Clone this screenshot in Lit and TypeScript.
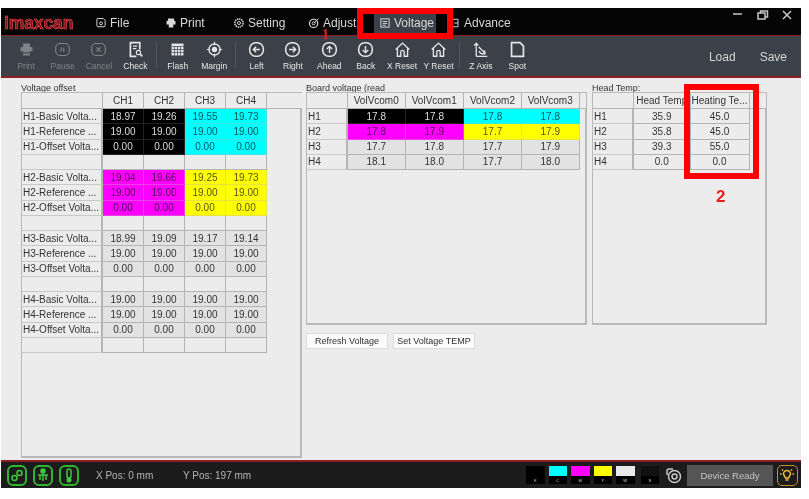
import { LitElement, html, css, svg } from 'lit';
import { customElement, property } from 'lit/decorators.js';

type Cell = { t: string; c?: string };

const ICONS: Record<string, unknown> = {
  print: svg`<path d="M6 7V3h8v4M3 12V8q0-1 1-1h12q1 0 1 1v4zM6 12v5h8v-5" fill="currentColor" stroke="none"/><path d="M6 14h8" stroke="#3c4149"/>`,
  pause: svg`<rect x="2" y="3" width="16" height="14" rx="5"/><path d="M8.5 7.500v5M11.500 7.500v5"/>`,
  cancel: svg`<rect x="2" y="3" width="16" height="14" rx="5"/><path d="M7.500 7.500l5 5M12.500 7.500l-5 5"/>`,
  check: svg`<path d="M15 10V2H4v16h7" stroke-width="2"/><path d="M7 6h5M7 9h4" /><circle cx="13.500" cy="13.500" r="2.500"/><path d="M15.500 15.500l2.500 2.500" stroke-width="2"/>`,
  flash: svg`<path d="M3 3h14v14H3z" fill="currentColor" stroke="none"/><path d="M3 6.500h14M3 10h14M3 13.500h14M6.500 6v11M10 6v11M13.500 6v11" stroke="#3c4149" stroke-width=".8"/>`,
  margin: svg`<path d="M10 1v4M10 15v4M1 10h4M15 10h4" /><circle cx="10" cy="10" r="6.500" stroke-width="1.600"/><circle cx="10" cy="10" r="2.500" fill="currentColor"/>`,
  left: svg`<rect x="2" y="2" width="16" height="16" rx="7" stroke-width="1.800"/><path d="M14 10H6.500M9.500 6.800L6.300 10l3.200 3.200" stroke-width="1.600"/>`,
  right: svg`<rect x="2" y="2" width="16" height="16" rx="7" stroke-width="1.800"/><path d="M6 10h7.500M10.500 6.800l3.200 3.200-3.200 3.200" stroke-width="1.600"/>`,
  ahead: svg`<rect x="2" y="2" width="16" height="16" rx="7" stroke-width="1.800"/><path d="M10 14V6.500M6.800 9.500L10 6.300l3.200 3.200" stroke-width="1.600"/>`,
  back: svg`<rect x="2" y="2" width="16" height="16" rx="7" stroke-width="1.800"/><path d="M10 6v7.500M6.800 10.500l3.200 3.200 3.200-3.200" stroke-width="1.600"/>`,
  home: svg`<path d="M2 10l8-7.500 8 7.500M4 8.500V18h4v-5q0-2 2-2t2 2v5h4V8.500" stroke-width="1.600"/>`,
  zaxis: svg`<path d="M5 18V3M2.500 5.500L5 2.500l2.500 3M5 18h13M8 7l8 8M15 11v4h-4M8 12l3 3" stroke-width="1.500"/>`,
  spot: svg`<path d="M3 2h10l4 4v12H3z" stroke-width="2"/>`,
};

const TOOLS: (null | { label: string; icon: string; off?: boolean })[] = [
  { label: 'Print', icon: 'print', off: true },
  { label: 'Pause', icon: 'pause', off: true },
  { label: 'Cancel', icon: 'cancel', off: true },
  { label: 'Check', icon: 'check' },
  null,
  { label: 'Flash', icon: 'flash' },
  { label: 'Margin', icon: 'margin' },
  null,
  { label: 'Left', icon: 'left' },
  { label: 'Right', icon: 'right' },
  { label: 'Ahead', icon: 'ahead' },
  { label: 'Back', icon: 'back' },
  { label: 'X Reset', icon: 'home' },
  { label: 'Y Reset', icon: 'home' },
  null,
  { label: 'Z Axis', icon: 'zaxis' },
  { label: 'Spot', icon: 'spot' },
];

const TABS = [
  { label: 'File', w: 70, icon: svg`<path d="M2.500 3.500q0-1.500 1.500-1.500h7l2.500 2.500v7q0 1.500-1.500 1.500H4q-1.500 0-1.500-1.500z"/><circle cx="8" cy="8.500" r="2"/>` },
  { label: 'Print', w: 68, icon: svg`<path d="M4 5V2h8v3M2 10V6q0-1 1-1h10q1 0 1 1v4zM5 10v4h6v-4" fill="currentColor" stroke="none"/>` },
  { label: 'Setting', w: 75, icon: svg`<circle cx="8" cy="8" r="5.500" stroke-dasharray="2 .8" stroke-width="2"/><circle cx="8" cy="8" r="2"/>` },
  { label: 'Adjust', w: 71, icon: svg`<circle cx="7.500" cy="8.500" r="5.500" stroke-width="1.600"/><circle cx="7.500" cy="8.500" r="2"/><path d="M8 8l6-6"/>` },
  { label: 'Voltage', w: 62, on: true, icon: svg`<rect x="2.500" y="2.500" width="11" height="11"/><path d="M5 6h6M5 8.500h6M5 11h4"/>` },
  { label: 'Advance', w: 70, icon: svg`<path d="M4 3h8v10H4M7 8h5"/>` },
];

const blank = (n: number): Cell[] => Array.from({ length: n }, () => ({ t: '' }));

const head = (prefix: string, rows: string[][], a = '', b = ''): Cell[][] => {
  const names = ['Basic Volta...', 'Reference ...', 'Offset Volta...'];
  return rows.map((r, i) => [
    { t: `${prefix}-${names[i]}` },
    ...r.map((t, j) => ({ t, c: j < 2 ? a : b })),
  ]);
};

const OFFSET_ROWS: Cell[][] = [
  ...head('H1', [['18.97', '19.26', '19.55', '19.73'], ['19.00', '19.00', '19.00', '19.00'], ['0.00', '0.00', '0.00', '0.00']], 'k', 'c'),
  blank(5),
  ...head('H2', [['19.04', '19.66', '19.25', '19.73'], ['19.00', '19.00', '19.00', '19.00'], ['0.00', '0.00', '0.00', '0.00']], 'm', 'y'),
  blank(5),
  ...head('H3', [['18.99', '19.09', '19.17', '19.14'], ['19.00', '19.00', '19.00', '19.00'], ['0.00', '0.00', '0.00', '0.00']], 'g', 'g'),
  blank(5),
  ...head('H4', [['19.00', '19.00', '19.00', '19.00'], ['19.00', '19.00', '19.00', '19.00'], ['0.00', '0.00', '0.00', '0.00']], 'g', 'g'),
  blank(5),
];

const BOARD_ROWS: Cell[][] = [
  [{ t: 'H1' }, { t: '17.8', c: 'k' }, { t: '17.8', c: 'k' }, { t: '17.8', c: 'c' }, { t: '17.8', c: 'c' }],
  [{ t: 'H2' }, { t: '17.8', c: 'm' }, { t: '17.9', c: 'm' }, { t: '17.7', c: 'y' }, { t: '17.9', c: 'y' }],
  [{ t: 'H3' }, { t: '17.7', c: 'g' }, { t: '17.8', c: 'g' }, { t: '17.7', c: 'g' }, { t: '17.9', c: 'g' }],
  [{ t: 'H4' }, { t: '18.1', c: 'g' }, { t: '18.0', c: 'g' }, { t: '17.7', c: 'g' }, { t: '18.0', c: 'g' }],
];

const TEMP_ROWS: Cell[][] = [
  [{ t: 'H1' }, { t: '35.9', c: 'l' }, { t: '45.0', c: 'l' }],
  [{ t: 'H2' }, { t: '35.8', c: 'l' }, { t: '45.0', c: 'l' }],
  [{ t: 'H3' }, { t: '39.3', c: 'l' }, { t: '55.0', c: 'l' }],
  [{ t: 'H4' }, { t: '0.0', c: 'l' }, { t: '0.0', c: 'l' }],
];

const INKS = [
  { k: 'K', c: '#000' },
  { k: 'C', c: '#00ffff' },
  { k: 'M', c: '#ff00ff' },
  { k: 'Y', c: '#ffff00' },
  { k: 'W', c: '#e8e8e8' },
  { k: 'S', c: '#111' },
];

@customElement('grid-table')
export class GridTable extends LitElement {
  static styles = css`
    :host {
      display: block;
    }
    .grid {
      display: grid;
      grid-template-rows: 16px;
      grid-auto-rows: 15.27px;
      font-size: 10px;
      color: #333;
    }
    .cell {
      display: flex;
      align-items: center;
      justify-content: center;
      overflow: hidden;
      white-space: nowrap;
      background: #ececec;
      border-right: 1px solid #b4b4b4;
      border-bottom: 1px solid #b4b4b4;
      box-sizing: border-box;
    }
    .name {
      justify-content: flex-start;
      padding-left: 1px;
      border-right-width: 2px;
      border-bottom-color: #c8c8c8;
    }
    .fill {
      border-right: none;
    }
    .k { background: #000; color: #ddd; border-color: #222; }
    .c { background: #00ffff; color: #05555c; border-color: #3fe5e5; }
    .m { background: #ff00ff; color: #4a1050; border-color: #e53fe5; }
    .y { background: #ffff00; color: #55551a; border-color: #e5e53f; }
    .g { background: #e2e2e2; }
    .l { background: #ececec; }
  `;

  @property({ type: Array }) cols: number[] = [];
  @property({ type: Array }) labels: string[] = [];
  @property({ type: Array }) rows: Cell[][] = [];

  render() {
    const tmpl = this.cols.map((w) => `${w}px`).join(' ');
    return html`
      <div class="grid" style="grid-template-columns:${tmpl}">
        ${this.labels.map(
          (l, i) => html`<div class="cell ${i === this.labels.length - 1 ? 'fill' : ''}">${l}</div>`
        )}
        ${this.rows.map((r) =>
          html`${r.map((c, i) => html`<div class="cell ${i === 0 ? 'name' : ''} ${c.c ?? ''}">${c.t}</div>`)}<div></div>`
        )}
      </div>
    `;
  }
}

@customElement('app-root')
export class AppRoot extends LitElement {
  static styles = css`
    :host {
      display: block;
      position: relative;
      width: 809px;
      height: 499px;
      overflow: hidden;
      background: #fff;
      font-family: 'Liberation Sans', Arial, sans-serif;
      filter: blur(0.6px);
    }
    .win {
      position: absolute;
      left: 1px;
      top: 8px;
      width: 800px;
      height: 480px;
      display: flex;
      flex-direction: column;
      background: #ececec;
    }
    .menu {
      height: 24px;
      padding-top: 3px;
      flex: none;
      display: flex;
      align-items: center;
      background: #050505;
      border-bottom: 1px solid #8c1f22;
      color: #d8d8d8;
      font-size: 12px;
    }
    .logo {
      width: 89px;
      flex: none;
      padding-left: 3px;
      box-sizing: border-box;
      font-size: 17.5px;
      letter-spacing: -0.1px;
      color: #7c1518;
      -webkit-text-stroke: 0.7px #e8474d;
      font-weight: bold;
    }
    .tab {
      height: 19px;
      flex: none;
      display: flex;
      align-items: center;
      gap: 3px;
      padding-left: 5px;
      box-sizing: border-box;
      white-space: nowrap;
    }
    .tab svg {
      width: 12px;
      height: 12px;
      fill: none;
      stroke: currentColor;
      stroke-width: 1.3;
      flex: none;
    }
    .tab.on {
      background: #3c4149;
      margin-right: 8px;
    }
    .ctrl {
      margin: -3px 0 0 auto;
      align-self: flex-start;
      display: flex;
      gap: 7px;
      padding: 0 5px 0 0;
    }
    .ctrl svg {
      width: 18px;
      height: 14px;
      fill: none;
      stroke: #c8c8c8;
      stroke-width: 1.5;
    }
    .tools {
      height: 40px;
      flex: none;
      display: flex;
      align-items: stretch;
      padding-left: 7px;
      background: #3c4149;
      border-bottom: 2px solid #8c1f22;
      color: #e6e6e6;
    }
    .tool {
      width: 36.4px;
      flex: none;
      display: flex;
      flex-direction: column;
      align-items: center;
      padding-top: 5px;
      box-sizing: border-box;
      font-size: 8.5px;
      white-space: nowrap;
    }
    .tool svg {
      width: 17px;
      height: 17px;
      fill: none;
      stroke: currentColor;
      stroke-width: 1.3;
      margin-bottom: 3px;
    }
    .tool.off {
      color: #80848a;
    }
    .sep {
      width: 1px;
      flex: none;
      margin: 6px 2.500px 8px;
      background: #51565e;
    }
    .io {
      margin-left: auto;
      display: flex;
      align-items: center;
      gap: 24px;
      padding: 2px 14px 0 0;
      font-size: 12px;
      color: #d4d4d4;
    }
    .body {
      flex: 1;
      min-height: 0;
      display: flex;
      padding: 7px 0 2px 20px;
      gap: 4px;
      font-size: 9px;
      color: #333;
    }
    .panel {
      display: flex;
      flex-direction: column;
      flex: none;
    }
    .wide {
      width: 281px;
    }
    .narrow {
      width: 175px;
      margin-left: 1px;
    }
    .cap {
      height: 7px;
      line-height: 7px;
      white-space: nowrap;
    }
    .frame {
      flex: 1;
      border: 1px solid #b9b9b9;
      border-right-width: 2px;
      border-bottom-width: 2px;
      box-sizing: border-box;
    }
    .short {
      flex: none;
      height: 233px;
    }
    .btns {
      display: flex;
      gap: 5px;
      margin-top: 8px;
    }
    .btn {
      width: 82px;
      height: 16px;
      display: flex;
      align-items: center;
      justify-content: center;
      background: #fbfbfb;
      border: 1px solid #dcdcdc;
      box-sizing: border-box;
      font-size: 9px;
      white-space: nowrap;
      color: #333;
    }
    .status {
      height: 28px;
      flex: none;
      display: flex;
      align-items: center;
      background: #1c1c1c;
      border-top: 2px solid #8c1f22;
      box-sizing: border-box;
      color: #b4b4b4;
      font-size: 10px;
    }
    .led {
      width: 20px;
      height: 21px;
      flex: none;
      margin-left: 6px;
      border: 2px solid #2fb52f;
      border-radius: 6px;
      box-sizing: border-box;
      color: #3fc83f;
    }
    .led svg {
      display: block;
      width: 16px;
      height: 17px;
      fill: none;
      stroke: currentColor;
      stroke-width: 1.5;
    }
    .x {
      margin-left: 17px;
      width: 87px;
    }
    .inks {
      margin-left: auto;
      display: flex;
      gap: 4px;
    }
    .ink {
      width: 18.500px;
      display: flex;
      flex-direction: column;
      align-items: center;
      background: #000;
      height: 18px;
    }
    .ink i {
      display: block;
      width: 100%;
      height: 10px;
    }
    .ink b {
      font-size: 4px;
      font-weight: normal;
      color: #ddd;
      margin-top: 2px;
    }
    .ink:last-child {
      margin-left: 2px;
    }
    .spin {
      width: 18px;
      height: 18px;
      margin: 0 5px 0 5px;
      fill: none;
      stroke: #c8c8c8;
      stroke-width: 1.500;
    }
    .ready {
      width: 86px;
      height: 21px;
      display: flex;
      align-items: center;
      justify-content: center;
      background: #555555;
      color: #c4c4c4;
      font-size: 9.5px;
    }
    .bulb {
      width: 21px;
      height: 21px;
      margin: 0 3px 0 4px;
      border: 1.500px solid #c8902a;
      border-radius: 5px;
      box-sizing: border-box;
      color: #f0c040;
    }
    .bulb svg {
      display: block;
      width: 18px;
      height: 18px;
      fill: none;
      stroke: currentColor;
      stroke-width: 1.500;
    }
    .mark {
      position: absolute;
      border: 6px solid #ff0000;
      box-sizing: border-box;
    }
    .m1 {
      left: 357px;
      top: 8px;
      width: 96px;
      height: 31px;
    }
    .m2 {
      left: 684px;
      top: 84px;
      width: 75px;
      height: 95px;
    }
    .num {
      position: absolute;
      color: #e8201c;
      font-weight: bold;
      line-height: 1;
    }
    .n1 {
      left: 322px;
      top: 28px;
      font-size: 14px;
      font-family: 'Liberation Serif', serif;
    }
    .n2 {
      left: 716px;
      top: 188px;
      font-size: 17px;
    }
  `;

  render() {
    return html`
      <div class="win">
        <div class="menu">
          <div class="logo">imaxcan</div>
          ${TABS.map(
            (t) => html`<div class="tab ${t.on ? 'on' : ''}" style="width:${t.w}px">
              <svg viewBox="0 0 16 16">${t.icon}</svg>${t.label}
            </div>`
          )}
          <div class="ctrl">
            <svg viewBox="0 0 18 14"><path d="M5 6h9"/></svg>
            <svg viewBox="0 0 18 14"><path d="M5 5h7v6H5zM7.500 5V3h7v6H12"/></svg>
            <svg viewBox="0 0 18 14"><path d="M5 3l8 8M13 3l-8 8"/></svg>
          </div>
        </div>

        <div class="tools">
          ${TOOLS.map((t) =>
            t
              ? html`<div class="tool ${t.off ? 'off' : ''}">
                  <svg viewBox="0 0 20 20">${ICONS[t.icon]}</svg>${t.label}
                </div>`
              : html`<div class="sep"></div>`
          )}
          <div class="io"><span>Load</span><span>Save</span></div>
        </div>

        <div class="body">
          <div class="panel wide">
            <div class="cap">Voltage offset</div>
            <div class="frame">
              <grid-table
                .cols=${[81, 41, 41, 41, 41, 35]}
                .labels=${['', 'CH1', 'CH2', 'CH3', 'CH4', '']}
                .rows=${OFFSET_ROWS}
              ></grid-table>
            </div>
          </div>
          <div class="panel wide">
            <div class="cap">Board voltage (read</div>
            <div class="frame short">
              <grid-table
                .cols=${[41, 57.5, 58.5, 58, 57.5, 6]}
                .labels=${['', 'VolVcom0', 'VolVcom1', 'VolVcom2', 'VolVcom3', '']}
                .rows=${BOARD_ROWS}
              ></grid-table>
            </div>
            <div class="btns">
              <div class="btn">Refresh Voltage</div>
              <div class="btn">Set Voltage TEMP</div>
            </div>
          </div>
          <div class="panel narrow">
            <div class="cap">Head Temp:</div>
            <div class="frame short">
              <grid-table
                .cols=${[41, 56.5, 59, 16]}
                .labels=${['', 'Head Temp', 'Heating Te...', '']}
                .rows=${TEMP_ROWS}
              ></grid-table>
            </div>
          </div>
        </div>

        <div class="status">
          <div class="led"><svg viewBox="0 0 16 17"><circle cx="5.500" cy="11" r="2.500"/><circle cx="10.500" cy="6" r="2.500"/></svg></div>
          <div class="led"><svg viewBox="0 0 16 17"><circle cx="8" cy="4" r="2" fill="currentColor"/><path d="M3 8h10M8 6v8M5 8v5M11 8v5"/></svg></div>
          <div class="led"><svg viewBox="0 0 16 17"><rect x="6" y="2" width="4" height="9" rx="2"/><circle cx="8" cy="13" r="1.800" fill="currentColor"/></svg></div>
          <span class="x">X Pos: 0 mm</span>
          <span>Y Pos: 197 mm</span>
          <div class="inks">
            ${INKS.map(
              (i) => html`<div class="ink"><i style="background:${i.c}"></i><b>${i.k}</b></div>`
            )}
          </div>
          <svg class="spin" viewBox="0 0 18 18"><circle cx="10.500" cy="10.500" r="6"/><circle cx="10.500" cy="10.500" r="2.500"/><path d="M3 9V5q0-2 2-2h4"/></svg>
          <div class="ready">Device Ready</div>
          <div class="bulb"><svg viewBox="0 0 18 18"><path d="M5.500 8a3.500 3.500 0 1 1 7 0l-2 4h-3zM7.500 14h3M2 8h1.500M14.500 8H16M4 3.500l1 1M14 3.500l-1 1"/></svg></div>
        </div>
      </div>

      <div class="mark m1"></div>
      <div class="mark m2"></div>
      <div class="num n1">1</div>
      <div class="num n2">2</div>
    `;
  }
}
